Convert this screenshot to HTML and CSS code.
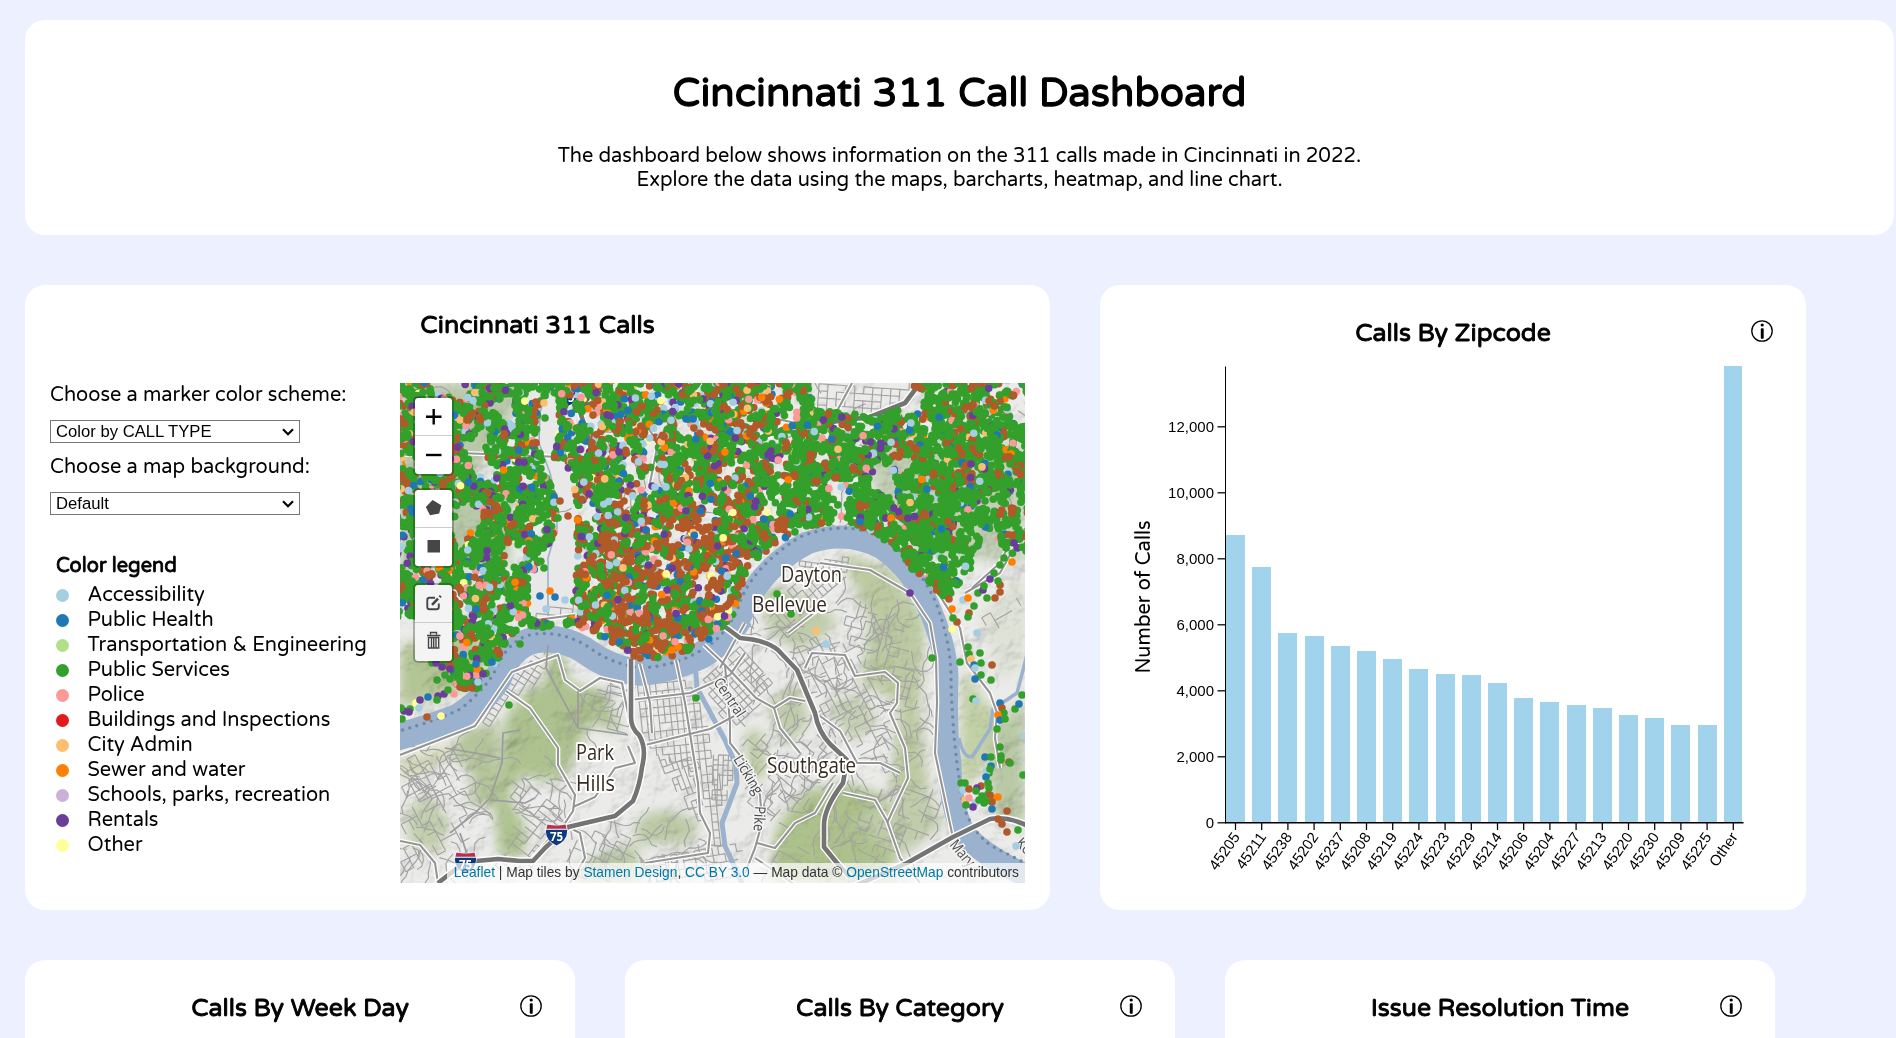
FILE: index.html
```html
<!DOCTYPE html>
<html lang="en">
<head>
<meta charset="utf-8">
<title>Cincinnati 311 Call Dashboard</title>
<link rel="stylesheet" href="styles.css">
</head>
<body>
<svg class="defs" width="0" height="0">
  <symbol id="info" viewBox="0 0 22 22">
    <circle cx="11" cy="11" r="10.2" fill="none" stroke="#000" stroke-width="1.3"/>
    <circle cx="11.2" cy="5" r="1.6"/>
    <rect x="9.8" y="8.2" width="2.9" height="10.6" rx=".8"/>
  </symbol>
  <symbol id="shield" viewBox="0 0 24 24">
    <path d="M2 0Q12 3 22 0Q28 16 12 24Q-4 16 2 0Z" fill="#fff"/>
    <path d="M2.6 1Q12 3 21.4 1L22.6 5.5H1.4Z" fill="#b9304c"/>
    <path d="M1.2 6.5H22.8Q24.5 17 12 23Q-.5 17 1.2 6.5Z" fill="#0b3a83"/>
  </symbol>
</svg>
<header class="card header">
  <h1>Cincinnati 311 Call Dashboard</h1>
  <p>The dashboard below shows information on the 311 calls made in Cincinnati in 2022.<br>Explore the data using the maps, barcharts, heatmap, and line chart.</p>
</header>
<main>
  <div class="row">
    <section class="card map-card">
      <h2>Cincinnati 311 Calls</h2>
      <div class="map-body">
        <div class="controls">
          <label>Choose a marker color scheme:</label>
          <div class="select"><select><option>Color by CALL TYPE</option></select><svg width="12" height="8" viewBox="0 0 12 8"><path d="M1 1.2L6 6.2L11 1.2" fill="none" stroke="#000" stroke-width="2.2"/></svg></div>
          <label>Choose a map background:</label>
          <div class="select"><select><option>Default</option></select><svg width="12" height="8" viewBox="0 0 12 8"><path d="M1 1.2L6 6.2L11 1.2" fill="none" stroke="#000" stroke-width="2.2"/></svg></div>
          <h3>Color legend</h3>
          <ul class="legend">
            <li><i class="c-acc"></i>Accessibility</li>
            <li><i class="c-hea"></i>Public Health</li>
            <li><i class="c-tra"></i>Transportation &amp; Engineering</li>
            <li><i class="c-ser"></i>Public Services</li>
            <li><i class="c-pol"></i>Police</li>
            <li><i class="c-bui"></i>Buildings and Inspections</li>
            <li><i class="c-cit"></i>City Admin</li>
            <li><i class="c-sew"></i>Sewer and water</li>
            <li><i class="c-sch"></i>Schools, parks, recreation</li>
            <li><i class="c-ren"></i>Rentals</li>
            <li><i class="c-oth"></i>Other</li>
          </ul>
        </div>
        <div class="map">
          <svg class="tiles" width="625" height="500" viewBox="0 0 625 500">
            <defs>
              <filter id="soft" x="-30%" y="-30%" width="160%" height="160%"><feGaussianBlur stdDeviation="6"/></filter>
              <filter id="relief" x="0" y="0" width="100%" height="100%">
                <feTurbulence type="fractalNoise" baseFrequency=".028 .03" numOctaves="4" seed="8" result="n"/>
                <feDiffuseLighting in="n" surfaceScale="9" diffuseConstant="1.15" lighting-color="#fff"><feDistantLight azimuth="225" elevation="58"/></feDiffuseLighting>
              </filter>
            </defs>
            <rect width="625" height="500" fill="#ebebea"/>
            <g id="hills" filter="url(#soft)">
              <path fill="#b3c594" d="M0 265L60 240L95 270L70 305L0 325Z"/>
              <path fill="#cfd6ae" d="M0 378L60 360L95 340L85 352L20 392L0 395Z"/>
              <path fill="#aec290" d="M105 335Q130 300 145 300L150 260L162 268L170 300L205 308L222 350L190 340L165 395L140 398L125 390L108 410L128 450L120 478L98 470L95 430L100 385Z"/>
              <path fill="#b4c59a" d="M65 345L98 340L98 425L70 420L72 390L50 370Z"/>
              <path fill="#c3cfae" d="M5 430L30 410L50 440L40 470L10 465Z"/>
              <path fill="#bccaa6" d="M235 440Q260 415 300 440L290 460L225 462L180 480L175 500L240 500Z"/>
              <path fill="#bccaa2" d="M440 170L490 185L525 235L520 330L530 420L510 440L490 400L500 320L460 300L470 240Z"/>
              <path fill="#adc18c" d="M375 450Q400 400 425 405L445 400L480 410L500 450L490 500L372 500Z"/>
              <path fill="#bccca0" d="M345 350L360 345L368 390L350 400Z"/>
              <path fill="#c0ccaa" d="M365 320L400 300L410 340L385 365Z"/>
              <path fill="#c0ccaa" d="M355 200L410 215L440 240L400 270L370 250Z"/>
              <path fill="#c5cfb2" d="M425 320L460 310L480 340L450 360Z"/>
              <path fill="#c0ccaa" d="M455 440L520 400L545 440L500 475Z"/>
              <path fill="#c2d0a5" d="M562 285L600 340L580 390L560 410Z"/>
              <path fill="#b9c9a6" d="M590 350L625 315L625 445L590 430Z"/>
              <path fill="#dfe2d6" d="M580 230L625 190L625 280L600 300Z"/>
              <path fill="#b8c8a8" d="M15 0H130L60 115L110 110L110 180L0 190V0Z"/>
              <path fill="#c3cfb6" d="M460 60H625V180L520 170L480 120Z"/>
            </g>
            <rect width="625" height="500" filter="url(#relief)" class="relief"/>
            <path d="M128 200L157 130L137 60L142 15L160 8L160 70L177 92L180 220L148 244L128 234Z" fill="#e8e8e8"/>
            <g id="streets" fill="none" stroke="#a2a2a2" stroke-width="1.15"></g>
            <g fill="none" stroke="#9ab2cd" stroke-linejoin="round">
              <path stroke-width="27" d="M-10 356Q40 342 60 333Q88 313 98 296Q110 262 135 257Q160 253 184 267Q210 286 235 289Q265 289 300 273Q325 259 340 234"/>
              <path stroke-width="23" d="M290 279Q328 262 342 230Q360 185 407 160Q447 146 482 165Q510 184 527 220Q546 262 547 295Q545 350 550 380Q550 425 565 452Q590 478 635 496"/>
              <path stroke-width="5" d="M295 280L297 305L325 357L336 382L337 400L322 440L325 463L342 500"/>
              <path stroke-width="3.5" d="M630 260L617 310L593 326L590 346L572 374Q563 375 559 355"/>
              <path stroke-width="1.6" d="M147 5L140 30L139 60L150 90L156 115L157 145L148 175L148 242"/>
            </g>
            <path fill="none" stroke="#7088a8" stroke-width="3.4" stroke-linecap="round" stroke-dasharray="0 7.5" d="M-5 349Q40 337 62 325Q88 303 96 286Q110 254 135 251Q165 248 190 265Q210 280 240 285Q275 283 300 268Q325 255 338 225Q350 185 400 154Q447 135 488 157Q520 184 536 220Q552 262 551 300Q553 360 560 400Q562 440 590 462L625 480"/>
            <g id="roads" fill="none" stroke-linejoin="round"></g>
            <g id="shields">
              <use href="#shield" x="145" y="440" width="23" height="24"/>
              <use href="#shield" x="54" y="468" width="23" height="24"/>
              <use href="#shield" x="157" y="1" width="22" height="24"/>
              <use href="#shield" x="186" y="175" width="22" height="22"/>
              <text class="shield-no" x="156.5" y="457.500">75</text>
              <text class="shield-no" x="65.500" y="485.500">75</text>
              <text class="shield-no" x="168" y="18.500">75</text>
            </g>
            <g id="markers"></g>
            <g class="places">
              <text x="381" y="199" textLength="61" lengthAdjust="spacingAndGlyphs">Dayton</text>
              <text x="352" y="229" textLength="75" lengthAdjust="spacingAndGlyphs">Bellevue</text>
              <text x="176" y="377" textLength="38" lengthAdjust="spacingAndGlyphs">Park</text>
              <text x="176" y="408" textLength="39" lengthAdjust="spacingAndGlyphs">Hills</text>
              <text x="367" y="390" textLength="89" lengthAdjust="spacingAndGlyphs">Southgate</text>
            </g>
            <g class="road-names">
              <text transform="translate(313 299) rotate(56)" textLength="44" lengthAdjust="spacingAndGlyphs">Central</text>
              <text transform="translate(333 376) rotate(59)" textLength="43" lengthAdjust="spacingAndGlyphs">Licking</text>
              <text transform="translate(355 423) rotate(93)" textLength="25" lengthAdjust="spacingAndGlyphs">Pike</text>
              <text transform="translate(549 462) rotate(50)" textLength="30" lengthAdjust="spacingAndGlyphs">Mary</text>
              <text transform="translate(615 461) rotate(45)" textLength="22" lengthAdjust="spacingAndGlyphs">Kell</text>
            </g>
            <g id="outliers"></g>
          </svg>
          <div class="bars">
            <div class="bar"><a>
              <svg viewBox="0 0 37 37"><path d="M11 18.700H26.500M18.700 11V26.500" stroke="#000" stroke-width="2.400"/></svg></a><a>
              <svg viewBox="0 0 37 37"><path d="M11 19H26.500" stroke="#000" stroke-width="2.400"/></svg></a></div>
            <div class="bar"><a>
              <svg viewBox="0 0 37 37"><path d="M17.600 10L26.300 15.200L24.200 23.500L15 25.200L10.800 17Z" fill="#464646"/></svg></a><a>
              <svg viewBox="0 0 37 37"><rect x="12.500" y="12" width="12.500" height="12.500" fill="#464646"/></svg></a></div>
            <div class="bar off"><a>
              <svg viewBox="0 0 37 37"><path d="M20 12.700H14.500Q12.300 12.700 12.300 15V22Q12.300 24.300 14.500 24.300H21.500Q23.800 24.300 23.800 22V18.500" fill="none" stroke="#464646" stroke-width="1.900"/><path d="M17 19.800L23 13.600M24.600 12.200L25.800 11" fill="none" stroke="#464646" stroke-width="2.600"/></svg></a><a>
              <svg viewBox="0 0 37 37"><path d="M15.500 11.500V9.500H21.500V11.500M12 12.500H25.500M13.500 14.500V25H23.700V14.500ZM16.500 15V24.500M18.700 15V24.500M21 15V24.500" fill="none" stroke="#464646" stroke-width="1.400"/></svg></a></div>
          </div>
          <div class="credit"><a>Leaflet</a> | Map tiles by <a>Stamen Design</a>, <a>CC BY 3.0</a> — Map data © <a>OpenStreetMap</a> contributors</div>
        </div>
      </div>
    </section>
    <section class="card zip-card">
      <div class="head"><h2>Calls By Zipcode</h2><svg class="info"><use href="#info"/></svg></div>
      <svg class="chart" id="chart" width="706" height="560" viewBox="1100 350 706 560"></svg>
    </section>
  </div>
  <div class="row">
    <section class="card small"><div class="head"><h2>Calls By Week Day</h2><svg class="info"><use href="#info"/></svg></div></section>
    <section class="card small"><div class="head"><h2>Calls By Category</h2><svg class="info"><use href="#info"/></svg></div></section>
    <section class="card small"><div class="head"><h2>Issue Resolution Time</h2><svg class="info"><use href="#info"/></svg></div></section>
  </div>
</main>
<script src="app.js"></script>
</body>
</html>
```

FILE: styles.css
```css
* { box-sizing: border-box; }
html { overflow: hidden; }
body {
  margin: 0;
  padding: 20px 0 0 25px;
  width: 1896px;
  height: 1038px;
  overflow: hidden;
  background: #edf1ff;
  color: #000;
  font: 20px/24px "Varela Round", "Noto Sans", sans-serif;
}
h1, h2, h3, p, ul { margin: 0; padding: 0; }
.defs { display: block; position: absolute; }
.card { background: #fff; border-radius: 20px; }
.header { width: 1869px; height: 215px; padding-top: 49px; text-align: center; }
h1 { font-size: 40px; line-height: 48px; font-weight: 400; -webkit-text-stroke: 1.3px #000; }
.header p { margin-top: 27px; }
main { display: flex; flex-direction: column; gap: 50px; margin-top: 50px; }
.row { display: flex; gap: 50px; }
h2 { font-size: 25px; line-height: 30px; font-weight: 400; text-align: center; -webkit-text-stroke: .9px #000; }

.map-card { width: 1025px; height: 625px; padding: 25px 25px 0; }
.map-body { display: flex; justify-content: space-between; margin-top: 43px; }
.controls { display: flex; flex-direction: column; width: 340px; height: 500px; }
.controls label { align-self: flex-start; white-space: nowrap; margin: 0 0 13px; }
.select { display: grid; width: 250px; height: 23px; margin-bottom: 12px; align-items: center; }
.select > * { grid-area: 1 / 1; }
.select svg { justify-self: end; margin-right: 6px; pointer-events: none; }
select {
  appearance: none;
  width: 250px;
  height: 23px;
  padding: 0 5px;
  border: 1px solid #767676;
  border-radius: 0;
  background: #fff;
  color: #000;
  font: 16.67px/20px "Liberation Sans", Arial, sans-serif;
}
h3 { margin: 27px 0 4px 6px; font-size: 20px; font-weight: 400; -webkit-text-stroke: .8px #000; }
.legend { list-style: none; margin-left: 6px; }
.legend li { display: flex; align-items: center; gap: 18.500px; height: 25px; white-space: nowrap; }
.legend i { width: 13px; height: 13px; border-radius: 50%; margin-top: 2px; }
.c-acc { background: #a6cee3; }
.c-hea { background: #1f78b4; }
.c-tra { background: #b2df8a; }
.c-ser { background: #33a02c; }
.c-pol { background: #fb9a99; }
.c-bui { background: #e31a1c; }
.c-cit { background: #fdbf6f; }
.c-sew { background: #ff7f00; }
.c-sch { background: #cab2d6; }
.c-ren { background: #6a3d9a; }
.c-oth { background: #ffff99; }

.map { position: relative; width: 625px; height: 500px; overflow: hidden; }
.tiles { display: block; }
.relief { mix-blend-mode: multiply; opacity: .35; }
.places text {
  font: 500 21px "Open Sans", sans-serif;
  fill: #372c22;
  stroke: #fff;
  stroke-width: 4px;
  paint-order: stroke;
  stroke-linejoin: round;
}
.road-names text {
  font: 15px "Open Sans", sans-serif;
  fill: #4a4a4a;
  stroke: #f3f3f3;
  stroke-width: 3px;
  paint-order: stroke;
}
.shield-no { font: bold 11.500px "Open Sans", sans-serif; fill: #fff; text-anchor: middle; }
.bars { position: absolute; left: 13px; top: 13px; display: flex; flex-direction: column; gap: 12px; }
.bar { width: 41px; height: 80px; border: 2px solid rgba(0,0,0,.25); border-radius: 5px; background: #fff; background-clip: padding-box; }
.bar a { display: block; height: 37px; }
.bar a + a { height: 38px; border-top: 1px solid #ccc; }
.bar svg { display: block; width: 37px; height: 37px; }
.bar.off { margin-top: 3px; background-color: #f4f4f4; }
.credit {
  position: absolute;
  right: 0;
  bottom: 0;
  height: 20px;
  padding: 0 6px 0 7px;
  background: rgba(255,255,255,.7);
  color: #333;
  font: 13.750px/19px "Liberation Sans", Arial, sans-serif;
  white-space: nowrap;
}
.credit a { color: #0078a8; }

.zip-card { width: 706px; height: 625px; padding-top: 33px; }
.head { display: grid; grid-template-columns: 1fr; align-items: start; }
.head > * { grid-area: 1 / 1; }
.info { width: 22px; height: 22px; justify-self: end; margin: 2px 33px 0 0; }
.chart { display: block; margin-top: 2px; }
.axis { font: 15px "Liberation Sans", Arial, sans-serif; }
.axis-title { font: 20px "Varela Round", "Noto Sans", sans-serif; }
.small { width: 550px; height: 78px; padding-top: 33px; border-radius: 20px 20px 0 0; }
```

FILE: app.js
```js
const NS = 'http://www.w3.org/2000/svg';
function add(parent, name, attrs, text) {
  const el = document.createElementNS(NS, name);
  for (const k in attrs) el.setAttribute(k, attrs[k]);
  if (text !== undefined) el.textContent = text;
  parent.appendChild(el);
  return el;
}
let seed = 4311;
function rnd() {
  seed = (seed + 0x6D2B79F5) | 0;
  let t = Math.imul(seed ^ (seed >>> 15), 1 | seed);
  t = (t + Math.imul(t ^ (t >>> 7), 61 | t)) ^ t;
  return ((t ^ (t >>> 14)) >>> 0) / 4294967296;
}
function inside(x, y, poly) {
  let hit = false;
  for (let i = 0, j = poly.length - 2; i < poly.length; j = i, i += 2) {
    const xi = poly[i], yi = poly[i + 1], xj = poly[j], yj = poly[j + 1];
    if ((yi > y) !== (yj > y) && x < (xj - xi) * (y - yi) / (yj - yi) + xi) hit = !hit;
  }
  return hit;
}

/* Bar chart */
const chart = document.getElementById('chart');
const zips = ['45205','45211','45238','45202','45237','45208','45219','45224','45223','45229','45214','45206','45204','45227','45213','45220','45230','45209','45225','Other'];
const tops = [535,567,633,636,646,651,659,669,674,675,683,698,702,705,708,715,718,725,725,366];
zips.forEach((z, i) => {
  const x = Math.round(1226 + i * 26.2);
  add(chart, 'rect', {x: x, y: tops[i], width: i === 19 ? 18 : 19, height: 823 - tops[i], fill: '#a2d3ec'});
});
const axis = add(chart, 'g', {class: 'axis'});
add(axis, 'path', {d: 'M1225.500 366.500V823', stroke: '#000', fill: 'none'});
add(axis, 'path', {d: 'M1225 822.800H1743.500', stroke: '#000', 'stroke-width': 1.4, fill: 'none'});
['0','2,000','4,000','6,000','8,000','10,000','12,000'].forEach((t, i) => {
  const y = 822.8 - i * 66;
  add(axis, 'path', {d: 'M1217.500 ' + y + 'H1226', stroke: '#000', 'stroke-width': 1.25});
  add(axis, 'text', {x: 1214, y: y + 5.2, 'text-anchor': 'end'}, t);
});
zips.forEach((z, i) => {
  const x = 1235.5 + i * 26.2;
  add(axis, 'path', {d: 'M' + x + ' 823V830', stroke: '#000', 'stroke-width': 1.25});
  add(axis, 'text', {transform: 'translate(' + (x + 5) + ' 837) rotate(-55)', 'text-anchor': 'end'}, z);
});
add(chart, 'text', {class: 'axis-title', transform: 'translate(1150 673.500) rotate(-90)', textLength: 153}, 'Number of Calls');

/* Local streets: rotated grids plus winding hill roads */
const streets = document.getElementById('streets');
function grid(poly, angle, dx, dy, keep) {
  let x0 = 1e9, x1 = -1e9, y0 = 1e9, y1 = -1e9;
  for (let i = 0; i < poly.length; i += 2) {
    x0 = Math.min(x0, poly[i]); x1 = Math.max(x1, poly[i]);
    y0 = Math.min(y0, poly[i + 1]); y1 = Math.max(y1, poly[i + 1]);
  }
  const cx = (x0 + x1) / 2, cy = (y0 + y1) / 2, r = Math.hypot(x1 - x0, y1 - y0) / 2;
  const c = Math.cos(angle * Math.PI / 180), s = Math.sin(angle * Math.PI / 180);
  const at = (u, v) => [cx + u * c - v * s, cy + u * s + v * c];
  let d = '';
  const seg = (u, v, u2, v2) => {
    const a = at(u, v), b = at(u2, v2);
    if (rnd() < keep && inside(a[0], a[1], poly) && inside(b[0], b[1], poly))
      d += 'M' + a[0].toFixed(1) + ' ' + a[1].toFixed(1) + 'L' + b[0].toFixed(1) + ' ' + b[1].toFixed(1);
  };
  for (let u = -r; u < r; u += dx) for (let v = -r; v < r; v += dy) {
    seg(u, v, u + dx, v);
    seg(u, v, u, v + dy);
  }
  add(streets, 'path', {d: d});
}
grid([232,296,290,294,305,330,322,400,325,470,312,470,300,400,250,370,238,340], 84, 8, 6, .9);
grid([250,368,300,375,305,450,290,430], 70, 7, 5, .85);
grid([300,295,340,262,365,285,375,300,345,345,325,345], 48, 7, 5.5, .93);
grid([310,370,336,370,330,420,312,425], 2, 5, 5, .85);
grid([120,280,150,262,145,300,110,320,85,350,78,335], 32, 8, 6, .85);
grid([180,312,228,290,232,360,180,330], 15, 10, 7, .55);
grid([365,235,400,190,450,180,445,202,415,225,385,262], 50, 9, 6, .75);
grid([395,178,452,172,452,190,400,190], 8, 6, 5, .9);
grid([412,0,518,0,500,24,470,36,412,29], 4, 9, 7, .85);
grid([0,370,70,355,70,460,0,500], 62, 11, 9, .45);
grid([108,390,160,420,170,450,125,495,80,490,110,460], 38, 10, 7, .6);
grid([160,455,230,440,240,500,165,500], 25, 12, 8, .6);
grid([240,470,345,455,345,500,240,500], 80, 8, 6, .7);
grid([370,270,410,300,420,350,470,380,500,400,490,330,460,260,400,250], 63, 9, 7, .6);
grid([450,210,510,250,520,330,480,320,440,260], 15, 10, 9, .5);
grid([340,350,420,350,450,380,440,400,370,440,345,420], 40, 10, 8, .5);
grid([360,440,430,400,430,480,360,500], 30, 14, 12, .3);
grid([450,400,540,400,545,450,500,480,450,470], 20, 12, 9, .45);
grid([572,230,625,200,625,235,580,255], -30, 10, 9, .5);
grid([128,225,178,215,178,240,128,242], 6, 12, 8, .8);
function winding(x0, y0, x1, y1, n) {
  for (let i = 0; i < n; i++) {
    let x = x0 + rnd() * (x1 - x0), y = y0 + rnd() * (y1 - y0), a = rnd() * 6.28;
    let d = 'M' + x.toFixed(1) + ' ' + y.toFixed(1);
    const k = 3 + rnd() * 5;
    for (let j = 0; j < k; j++) {
      a += (rnd() - .5) * 1.5;
      x += Math.cos(a) * 6; y += Math.sin(a) * 6;
      d += 'L' + x.toFixed(1) + ' ' + y.toFixed(1);
    }
    add(streets, 'path', {d: d, 'stroke-linejoin': 'round'});
  }
}
winding(5, 368, 85, 480, 45);
winding(110, 390, 165, 440, 12);
winding(170, 300, 228, 350, 10);
winding(350, 220, 520, 300, 45);
winding(370, 290, 520, 430, 60);
winding(340, 400, 530, 490, 22);
winding(165, 440, 340, 490, 28);
winding(10, 10, 620, 160, 40);

/* Arterials and freeways, with white casing */
const roads = document.getElementById('roads');
const arterials = [
  'M0 372L75 343L112 289L158 272L165 297L180 308L200 295L222 300L227 325L230 340',
  'M106 308L130 325L158 365L158 382L175 412L173 428L165 440',
  'M173 424L195 414L215 385L235 380L228 363',
  'M0 458L20 462L35 480L38 500', 'M168 444L180 450L185 475L170 500',
  'M130 478L150 455L165 452', 'M240 281L250 320L252 350', 'M276 277L285 320L298 400L300 430L310 450L308 470L245 480',
  'M230 317L290 310L330 292', 'M245 362L310 346L340 330', 'M330 292L345 270', 'M304 262L325 282L356 315L374 325L390 315L405 318',
  'M325 282L330 340L330 360L350 385L360 412L362 440L355 465L345 490',
  'M374 325L380 345L400 370',
  'M405 285L412 270L445 272L455 293L485 289L498 300L497 320L490 330L505 365L508 395L487 440',
  'M420 333L440 348L457 380L480 380L500 390', 'M443 410L475 417L487 438L500 475L520 500',
  'M433 400L415 430L395 440L375 465L357 460', 'M355 475L400 505',
  'M388 250L420 225', 'M420 180L470 187L510 210L530 240L536 275L537 320L535 370L553 455',
  'M535 205L560 245L567 280L590 310L597 330L595 355L600 385',
  'M572 205L600 180L610 160L600 150', 'M565 210L600 190L625 145',
  'M0 72L60 70L160 74', 'M300 20L420 45', 'M128 238L175 232', 'M210 220L240 270', 'M345 240L320 285',
  'M436 30L452 0', 'M250 100L258 60L245 40'];
const lanes = ['M120 347L103 350L102 380L90 415L75 430L50 450', 'M90 417L125 420L135 415', 'M45 365L75 370L100 375', 'M148 262L146 285L178 345', 'M178 308L178 345L228 352', 'M60 450L70 480'];
const freeways = [
  'M231 276V334Q231 345 239 352Q247 365 242 384Q240 402 233 418L215 433L168 444L145 465L133 478H120L98 476L65 479L38 500',
  'M308 231L340 255Q366 257 378 267L397 287L415 330Q418 348 430 361L447 377L443 400Q424 425 424 442V464L437 480L450 494',
  'M450 505L507 480L553 454L590 436Q607 433 628 443',
  'M171 0L190 60L195 120', 'M360 55L385 45L470 34L505 20L520 0', 'M210 220L235 240'];
for (const d of arterials) add(roads, 'path', {d: d, stroke: '#fff', 'stroke-width': 4.6});
for (const d of lanes) add(roads, 'path', {d: d, stroke: '#9c9c9c', 'stroke-width': 1.7});
for (const d of arterials) add(roads, 'path', {d: d, stroke: '#959595', 'stroke-width': 2.1});
for (const d of freeways) add(roads, 'path', {d: d, stroke: '#fff', 'stroke-width': 7.5});
for (const d of freeways) add(roads, 'path', {d: d, stroke: '#747474', 'stroke-width': 4.6});

/* Call markers */
const G = '#33a02c', B = '#b15928', P = '#6a3d9a', U = '#1f78b4', L = '#a6cee3', K = '#fb9a99', O = '#ff7f00', C = '#fdbf6f', Y = '#ffff99';
const area = [-5,-5, 630,-5, 630,168, 612,172, 592,150, 577,172, 562,203, 545,217, 528,197, 511,186, 500,168, 475,150, 448,138, 420,141, 395,149, 370,164, 350,185, 340,205, 334,232, 316,252, 295,265, 265,276, 235,275, 210,258, 185,246, 165,242, 150,245, 127,246, 110,252, 100,275, 92,284, 77,307, 58,306, 50,288, 38,278, 32,262, 20,235, -5,235];
const holes = [
  [138,24,152,7,160,20,157,60,152,74,173,90,177,130,177,187,172,214,178,232,148,240,128,234,128,200,145,174,157,144,155,114,142,77,137,54],
  [412,-5,518,-5,500,24,482,34,437,29,413,27],
  [606,21,625,2,630,43,612,40],
  [468,98,480,72,497,100,500,125,487,112,470,108],
  [58,54,84,58,95,102,75,90],
  [26,-5,62,-5,66,22,45,12], [90,22,112,14,118,40,100,36],
  [58,120,78,124,84,135,68,150,60,170],
  [245,60,258,57,258,83,245,84], [238,95,262,86,268,104,246,111],
  [270,28,288,40,286,60,276,50], [190,30,202,42,200,52,190,42],
  [372,78,386,78,388,92,372,92], [132,142,145,138,144,156,132,154],
  [104,160,128,170,120,185,106,180], [375,40,392,30,392,40,376,50],
  [272,138,278,138,278,155,270,150],
  [565,195,580,170,598,160,590,180,570,205], [515,5,520,0,520,28,500,35,498,25],
  [440,105,450,110,446,125,440,120]];
function shade(x, y) {
  const r = rnd();
  const core = x > 178 && x < 335 && y > 130;
  const mid = x > 178 && x < 380;
  const g = core ? .25 : mid ? .38 : x >= 380 ? .58 : .48;
  const b = core ? .42 : mid ? .26 : x >= 380 ? .17 : .14;
  if (r < g) return G;
  if (r < g + b) return B;
  const q = rnd();
  return q < .26 ? P : q < .5 ? U : q < .68 ? L : q < .82 ? K : q < .91 ? O : q < .97 ? C : Y;
}
const layer = document.getElementById('markers');
const dot = (g, x, y, c) => add(g, 'circle', {cx: x.toFixed(1), cy: y.toFixed(1), r: 3.8, fill: c});
for (let i = 0; i < 6600; i++) {
  let x = rnd() * 635 - 5, y = rnd() * 315 - 5;
  if (x > 555 && y > 120 && rnd() < .6) continue;
  const c = shade(x, y);
  const n = c === G ? 3 : c === B ? 2 : 1;
  for (let k = 0; k < n; k++) {
    if (inside(x, y, area) && !holes.some(h => inside(x, y, h))) dot(layer, x, y, c);
    x += (rnd() - .5) * 12; y += (rnd() - .5) * 12;
  }
}
const extra = document.getElementById('outliers');
[[145,35,G],[144,20,C],[155,74,B],[160,118,B],[158,135,G],[168,133,B],[144,185,G],[150,208,O],[140,213,U],[146,226,L],[155,214,U],[165,217,L],[149,243,G],[252,103,P],[255,104,L],[266,104,L],[304,67,B],
 [120,261,G],[109,322,G],[27,334,B],[41,333,Y],[296,315,G],[377,211,G],[391,231,G],[416,248,C],[426,261,L],[510,210,P],[532,275,G],
 [83,291,P],[78,299,L],[76,281,U],[92,279,U],[37,297,G],[65,305,B],[72,305,B],[54,311,K],[44,311,P],[38,313,P],[28,314,U],[37,317,G],[16,320,Y],[19,325,L],[4,328,P],[2,336,G],[10,326,G],[9,329,P],[48,307,G],[60,304,B],[1,325,G],[20,317,P],
 [45,292,G],[50,296,G],[56,293,G],[60,298,G],[42,284,P],[50,286,P],[58,288,G],[64,300,G],[32,280,G],[36,280,P],
 [549,216,B],[552,226,O],[563,217,L],[568,215,O],[574,223,G],[569,230,B],[568,234,G],[557,239,B],[552,246,Y],[577,250,L],[553,235,G],[578,210,G],[583,207,P],[590,196,P],[587,215,G],[595,215,B],[600,202,B],[600,209,B],[612,179,O],[594,190,G],[600,182,G],[604,175,G],[598,198,G],[584,203,G],
 [568,264,G],[569,271,G],[560,279,G],[580,270,G],[571,276,C],[574,282,U],[581,280,G],[592,282,B],[575,285,L],[581,292,G],[575,296,U],[591,297,G],[573,316,G],[576,318,L],[600,320,U],[602,325,B],[604,330,G],[598,332,O],[600,337,U],[605,336,G],[597,346,G],[615,326,G],[619,321,U],[622,312,G],[600,364,G],[585,374,U],[591,374,G],[601,377,G],[609,379,B],[610,380,G],[625,353,L],[623,392,G],[601,373,G],
 [591,383,U],[589,390,G],[587,388,L],[586,394,U],[588,400,G],[590,386,G],[561,400,G],[563,407,L],[569,406,B],[581,403,B],[577,405,P],[565,417,C],[576,408,G],[582,413,G],[588,411,G],[593,415,O],[598,414,O],[592,419,B],[584,420,G],[575,420,L],[569,415,K],[566,422,G],[573,424,P],[592,426,U],[607,428,B],[598,436,B],[602,441,B],[607,449,B],[618,447,G],[616,463,L],[589,405,G],[565,400,G],[590,412,B],[579,417,G],[586,418,G]
].forEach(p => dot(extra, p[0], p[1], p[2]));
```
